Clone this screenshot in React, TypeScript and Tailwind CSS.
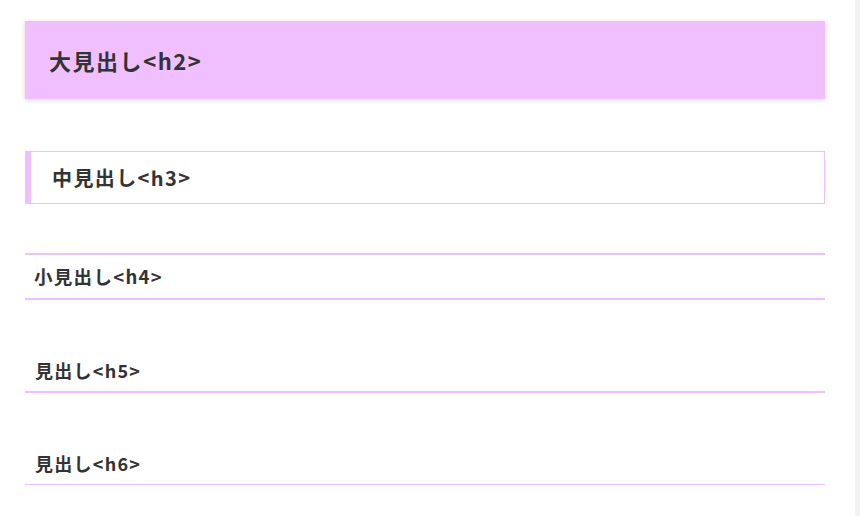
import React from "react";

export default function App() {
  const font = { fontFamily: '"Noto Sans CJK JP", "Liberation Sans", sans-serif' };
  return (
    <div className="flex h-[516px] w-[860px] overflow-hidden bg-white text-[#333]" style={font}>
      <div className="flex-1 pl-[25px] pr-[30px] pt-[21px]">
        <h2 className="bg-[#efbfff] pl-[24px] py-[22.5px] text-[22px] leading-[33px] font-bold tracking-[0.07em] shadow-[0_1px_5px_rgba(0,0,0,0.16)]">
          大見出し&lt;h2&gt;
        </h2>
        <h3 className="mt-[52px] border border-l-[6px] border-[#efbfff] pl-[21px] pt-[11px] pb-[10px] text-[20px] leading-[30px] font-bold tracking-[0.07em]">
          中見出し&lt;h3&gt;
        </h3>
        <h4 className="mt-[49px] border-y-2 border-[#efbfff] pl-[9px] py-[8px] text-[18.5px] leading-[27px] font-bold tracking-[0.07em]">
          小見出し&lt;h4&gt;
        </h4>
        <h5 className="mt-[50px] border-b-2 border-[#efbfff] pl-[10px] py-[7px] text-[18px] leading-[27px] font-bold tracking-[0.07em]">
          見出し&lt;h5&gt;
        </h5>
        <h6 className="mt-[50px] border-b border-[#efbfff] pl-[10px] py-[7px] text-[18px] leading-[27px] font-bold tracking-[0.07em]">
          見出し&lt;h6&gt;
        </h6>
      </div>
      <div className="h-full w-[5px] bg-[#f2f2f4]" />
    </div>
  );
}
